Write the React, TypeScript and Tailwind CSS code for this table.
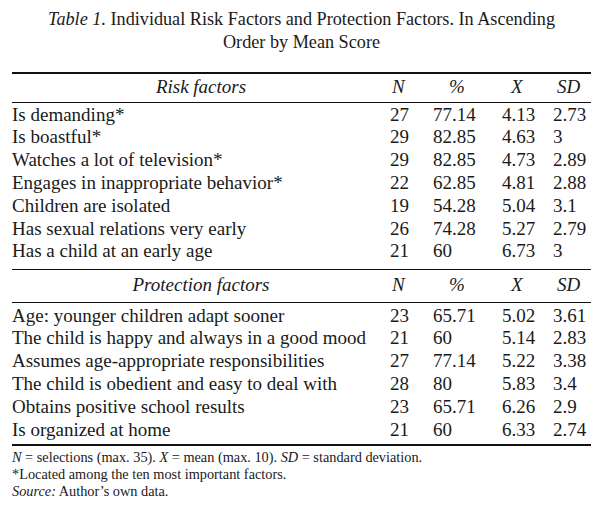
import React from "react";

const risk: [string, string, string, string, string][] = [
  ["Is demanding*", "27", "77.14", "4.13", "2.73"],
  ["Is boastful*", "29", "82.85", "4.63", "3"],
  ["Watches a lot of television*", "29", "82.85", "4.73", "2.89"],
  ["Engages in inappropriate behavior*", "22", "62.85", "4.81", "2.88"],
  ["Children are isolated", "19", "54.28", "5.04", "3.1"],
  ["Has sexual relations very early", "26", "74.28", "5.27", "2.79"],
  ["Has a child at an early age", "21", "60", "6.73", "3"],
];

const prot: [string, string, string, string, string][] = [
  ["Age: younger children adapt sooner", "23", "65.71", "5.02", "3.61"],
  ["The child is happy and always in a good mood", "21", "60", "5.14", "2.83"],
  ["Assumes age-appropriate responsibilities", "27", "77.14", "5.22", "3.38"],
  ["The child is obedient and easy to deal with", "28", "80", "5.83", "3.4"],
  ["Obtains positive school results", "23", "65.71", "6.26", "2.9"],
  ["Is organized at home", "21", "60", "6.33", "2.74"],
];

const cols = "grid grid-cols-[378px_43px_69px_51px_40px]";

function Header({ label, cls }: { label: string; cls: string }) {
  return (
    <div className={`${cols} items-start italic ${cls}`}>
      <div className="text-center">{label}</div>
      <div className="pl-[2px]">N</div>
      <div className="pl-[16px]">%</div>
      <div className="pl-[9px]">X</div>
      <div className="pl-[4px]">SD</div>
    </div>
  );
}

function Row({ r }: { r: [string, string, string, string, string] }) {
  return (
    <div className={`${cols} h-[22.8px] items-center`}>
      <div className="whitespace-nowrap">{r[0]}</div>
      <div>{r[1]}</div>
      <div>{r[2]}</div>
      <div>{r[3]}</div>
      <div>{r[4]}</div>
    </div>
  );
}

export default function App() {
  return (
    <div className="w-[603px] h-[506px] bg-white text-[#1a1a1a] px-[12px] pt-[8px] font-['Liberation_Serif','DejaVu_Serif',serif]">
      <div className="text-center text-[18.2px] leading-[23px]">
        <div>
          <span className="italic">Table 1.</span> Individual Risk Factors and Protection Factors. In Ascending
        </div>
        <div>Order by Mean Score</div>
      </div>
      <div className="mt-[18px] border-t-2 border-[#111]" />
      <div className="text-[19px] leading-[22.5px]">
        <Header label="Risk factors" cls="h-[28px] pt-[1.5px]" />
        <div className="border-t border-[#111]" />
        <div className="pt-[0.5px] pb-[5.9px]">
          {risk.map((r) => (
            <Row key={r[0]} r={r} />
          ))}
        </div>
        <div className="border-t border-[#111]" />
        <Header label="Protection factors" cls="h-[32px] pt-[4px]" />
        <div className="border-t border-[#111]" />
        <div className="pt-[1.5px] pb-[2.7px]">
          {prot.map((r) => (
            <Row key={r[0]} r={r} />
          ))}
        </div>
      </div>
      <div className="border-t-2 border-[#111]" />
      <div className="pt-[3px] text-[14.3px] leading-[17px]">
        <div>
          <span className="italic">N</span> = selections (max. 35). <span className="italic">X</span> = mean (max. 10).{" "}
          <span className="italic">SD</span> = standard deviation.
        </div>
        <div>*Located among the ten most important factors.</div>
        <div>
          <span className="italic">Source:</span> Author’s own data.
        </div>
      </div>
    </div>
  );
}
